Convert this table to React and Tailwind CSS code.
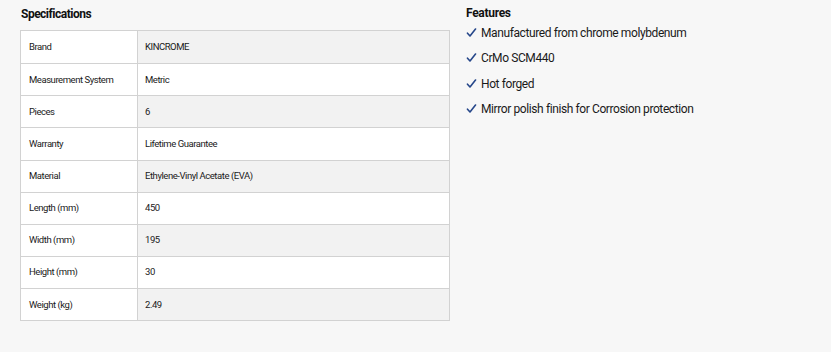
import React from "react";

const rows = [
  ["Brand", "KINCROME"],
  ["Measurement System", "Metric"],
  ["Pieces", "6"],
  ["Warranty", "Lifetime Guarantee"],
  ["Material", "Ethylene-Vinyl Acetate (EVA)"],
  ["Length (mm)", "450"],
  ["Width (mm)", "195"],
  ["Height (mm)", "30"],
  ["Weight (kg)", "2.49"],
];

const features = [
  "Manufactured from chrome molybdenum",
  "CrMo SCM440",
  "Hot forged",
  "Mirror polish finish for Corrosion protection",
];

export default function App() {
  return (
    <div
      className="w-[831px] h-[352px] bg-[#f7f7f7] text-[#1a1a1a] flex gap-[16px] pl-[20px] pt-[6px]"
      style={{ fontFamily: "Roboto, 'Liberation Sans', sans-serif" }}
    >
      <div className="w-[430px] flex flex-col">
        <h2 className="text-[12px] font-bold leading-[16px] pl-[1px] mb-[8px] text-[#111] tracking-[-0.5px]">Specifications</h2>
        <div className="border border-[#d2d2d2] flex flex-col">
          {rows.map(([k, v], i) => (
            <div
              key={k}
              className={`flex h-[32.15px] text-[9.5px] tracking-[-0.45px] ${i > 0 ? "border-t border-[#d2d2d2]" : ""}`}
            >
              <div className="w-[117px] bg-white border-r border-[#d2d2d2] pl-[8px] flex items-center">{k}</div>
              <div className={`flex-1 pl-[7px] flex items-center ${i % 2 === 0 ? "bg-[#f2f2f2]" : "bg-white"}`}>{v}</div>
            </div>
          ))}
        </div>
      </div>
      <div className="flex flex-col">
        <h2 className="text-[12px] font-bold leading-[15px] text-[#111] tracking-[-0.3px]">Features</h2>
        <ul className="flex flex-col -mt-[1px]">
          {features.map((f) => (
            <li key={f} className="flex items-center h-[25.5px] text-[12px] leading-[16px] tracking-[-0.4px]">
              <svg width="15" height="10" viewBox="0 0 15 10" className="shrink-0">
                <path d="M1.5 5.2 L4 8 L9.5 1" fill="none" stroke="#26478a" strokeWidth="1.6" strokeLinecap="round" strokeLinejoin="round" />
              </svg>
              <span>{f}</span>
            </li>
          ))}
        </ul>
      </div>
    </div>
  );
}
